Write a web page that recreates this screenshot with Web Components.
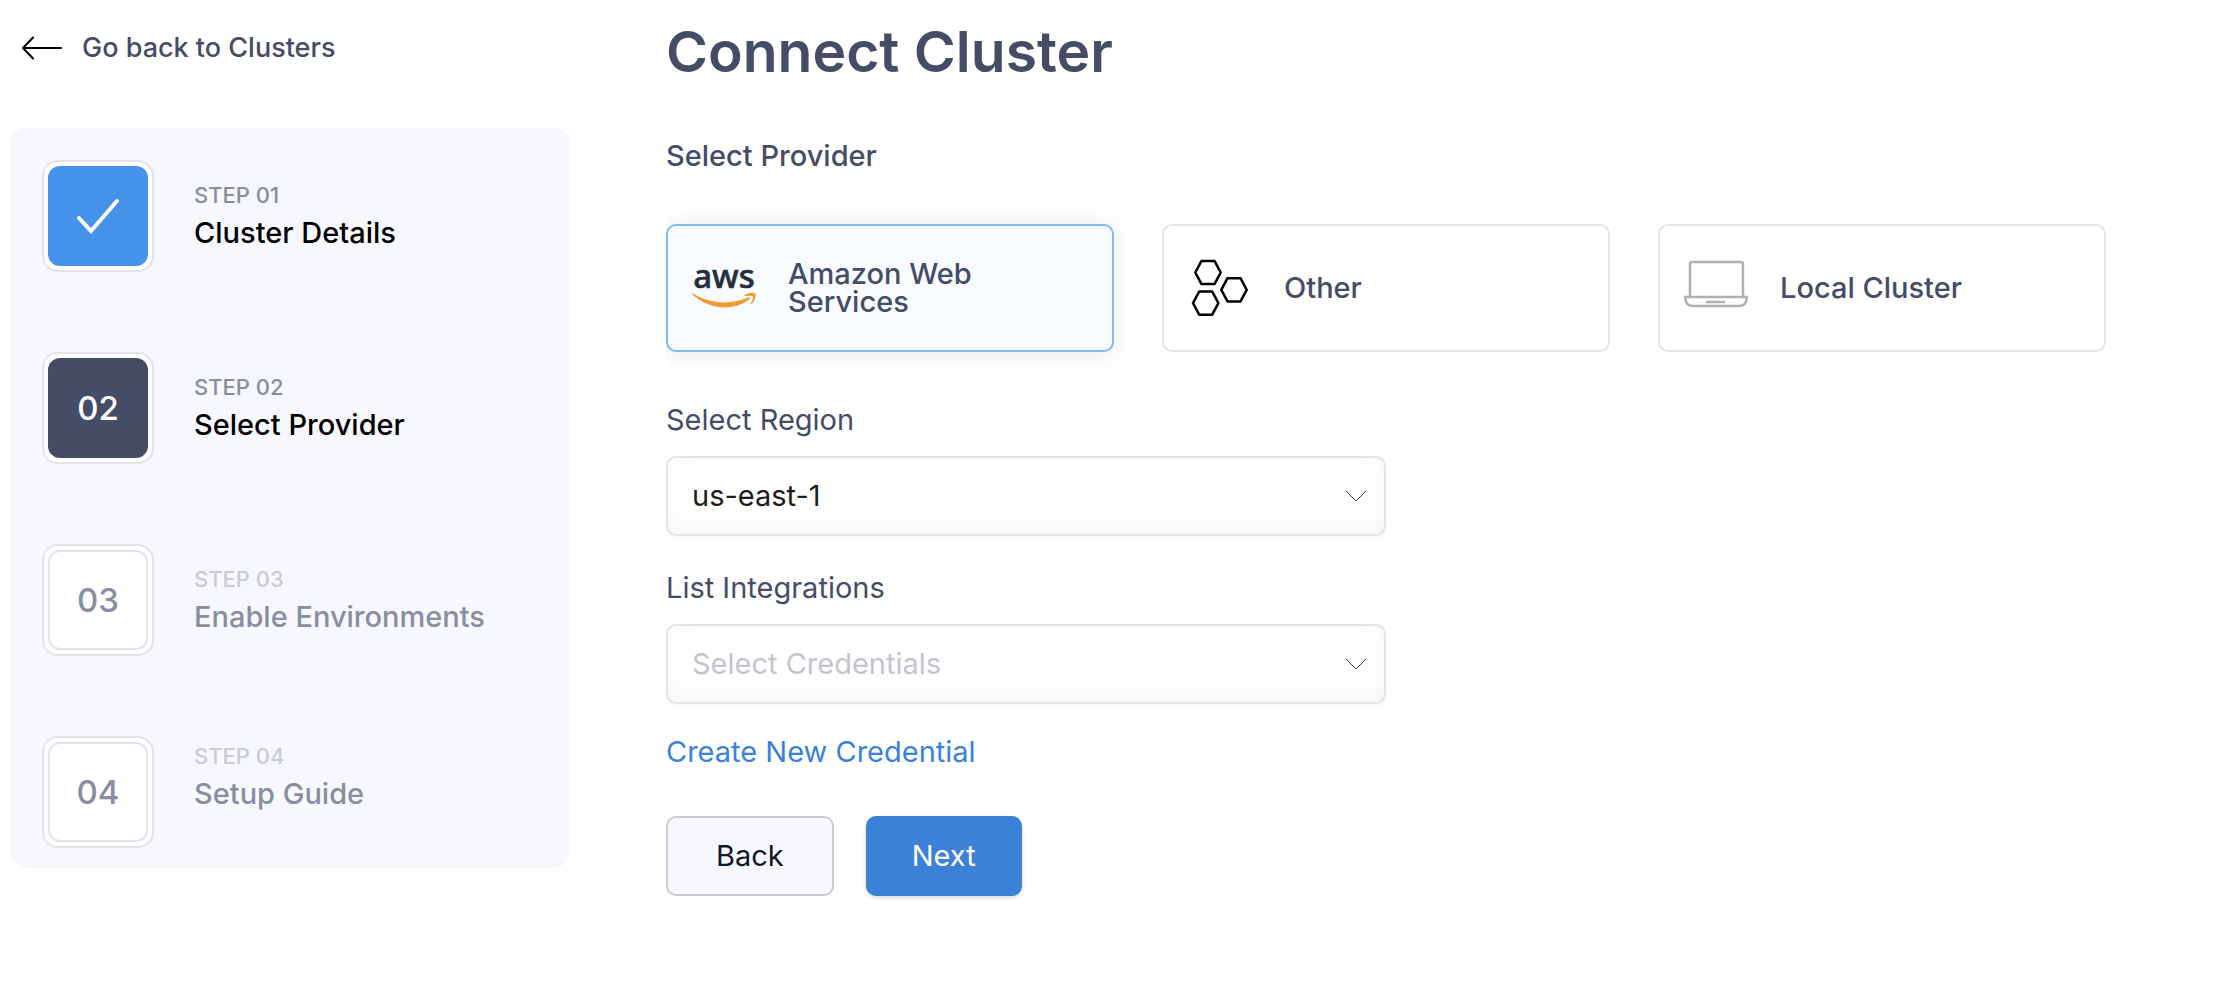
<!DOCTYPE html>
<html lang="en">
<head>
<meta charset="utf-8">
<meta name="viewport" content="width=device-width, initial-scale=1">
<title>Connect Cluster</title>
<style>
  body {
    margin: 0;
    background: #fff;
    color: #454c66;
    font-family: Inter, "Open Sans", sans-serif;
    font-size: 29px;
    line-height: 40px;
  }
</style>
</head>
<body>
<connect-cluster-page>
  <back-link slot="aside" href="#clusters">Go back to Clusters</back-link>
  <step-list slot="aside">
    <step-item state="done" number="01">Cluster Details</step-item>
    <step-item state="current" number="02">Select Provider</step-item>
    <step-item number="03">Enable Environments</step-item>
    <step-item number="04">Setup Guide</step-item>
  </step-list>

  <provider-picker>
    <provider-card selected>
      <svg slot="icon" width="64" height="64" viewBox="0 0 64 64" overflow="visible" aria-hidden="true">
        <text x="32" y="32" text-anchor="middle" font-family="Noto Sans, Open Sans, sans-serif" font-size="33" fill="#252f3e" stroke="#252f3e" stroke-width=".6">aws</text>
        <path d="M1 37.500C10 43 21 46.500 32 46.500c8 0 17-2 24.500-5.200 1.200-.5 2.200.8 1 1.700C51 48.800 41 51.500 33 51.500 21 51.500 9.500 46.500.5 38.800c-.7-.7-.2-1.600.5-1.300z" fill="#f29b34"/>
        <path d="M61 40.500c-1-1.200-6-.6-8.300-.3-.7.1-.8-.5-.2-1C56.800 36 62.900 36.400 63.500 37.300c.7 1-.2 7.500-3.800 10.500-.6.500-1.100.2-.9-.4.900-2 2.700-5.700 2.200-6.900z" fill="#f29b34"/>
      </svg>
      Amazon Web Services
    </provider-card>
    <provider-card>
      <svg slot="icon" width="64" height="64" viewBox="0 0 64 64" fill="none" stroke="#000" stroke-width="2.500" stroke-linejoin="round" aria-hidden="true">
        <path d="M13.500 4.900h13l6.200 11.600-6.200 11.600h-13L7.300 16.500z"/>
        <path d="M39.500 22.200h13l6.200 11.600-6.200 11.600h-13l-6.200-11.600z"/>
        <path d="M11.200 35.500h13l6.200 11.600-6.200 11.600h-13L5 47.100z"/>
      </svg>
      Other
    </provider-card>
    <provider-card>
      <svg slot="icon" width="64" height="64" viewBox="0 0 64 64" fill="none" stroke="#b0b0b0" stroke-width="2.500" aria-hidden="true">
        <path d="M6 40V8q0-2 2-2h49q2 0 2 2v32"/>
        <path d="M1.200 41h61.600q0 9-8 9H9.200q-8 0-8-9z"/>
        <path d="M22 46h19"/>
      </svg>
      Local Cluster
    </provider-card>
  </provider-picker>

  <select-field label="Select Region" value="us-east-1"></select-field>
  <select-field label="List Integrations" placeholder="Select Credentials"></select-field>
  <text-link href="#new-credential">Create New Credential</text-link>
  <form-actions>
    <action-button>Back</action-button>
    <action-button variant="primary">Next</action-button>
  </form-actions>
</connect-cluster-page>

<script>
function define(name, html, setup) {
  const template = document.createElement('template');
  template.innerHTML = html;
  customElements.define(name, class extends HTMLElement {
    connectedCallback() {
      if (this.shadowRoot) return;
      const root = this.attachShadow({ mode: 'open' });
      root.append(template.content.cloneNode(true));
      if (setup) setup(this, root);
    }
  });
}

define('connect-cluster-page', `
  <style>
    :host { display: grid; grid-template-columns: 7fr 18fr; gap: 96px; align-items: start; padding: 24px 132px 24px 10px; }
    aside { display: flex; flex-direction: column; gap: 56px; }
    main { display: flex; flex-direction: column; }
    h1 { margin: 0; font-size: 57px; font-weight: 600; line-height: 56px; }
    h2 { margin: 56px 0 48px; font-size: 29px; font-weight: 500; line-height: 40px; }
  </style>
  <aside><slot name="aside"></slot></aside>
  <main>
    <h1>Connect Cluster</h1>
    <h2>Select Provider</h2>
    <slot></slot>
  </main>`);

define('back-link', `
  <style>
    :host { display: flex; padding-left: 12px; }
    a { display: flex; align-items: center; gap: 20px; color: inherit; font-size: 27px; font-weight: 500; line-height: 48px; text-decoration: none; }
  </style>
  <a><svg width="40" height="24" viewBox="0 0 40 24" fill="none" stroke="#000" stroke-width="2" stroke-linecap="round" stroke-linejoin="round" aria-hidden="true"><path d="M39 12H1M11 1.500L1 12l10 10.500"/></svg><slot></slot></a>`,
  (host, root) => { root.querySelector('a').href = host.getAttribute('href'); });

define('step-list', `
  <style>
    :host { display: block; padding: 32px 32px 20px; border-radius: 16px; background: #f7f8fe; }
    nav { display: flex; flex-direction: column; gap: 80px; }
    ::slotted(:last-child) { --text-lift: 36px; }
  </style>
  <nav aria-label="Steps"><slot></slot></nav>`);

define('step-item', `
  <style>
    :host { display: flex; align-items: center; gap: 40px; --number: #888da0; --caption: #c9cad8; --title: #888da0; --fill: #fff; --edge: #e3e3ea; }
    :host([state]) { --number: #fff; --caption: #888da0; --title: #000; }
    :host([state="done"]) { --fill: #4592eb; --edge: #4592eb; }
    :host([state="current"]) { --fill: #454c66; --edge: #454c66; }
    .box { box-sizing: border-box; flex: none; width: 112px; height: 112px; padding: 4px; border: 2px solid #e3e3ea; border-radius: 16px; background: #fff; }
    .fill { box-sizing: border-box; display: grid; place-items: center; height: 100px; border: 2px solid var(--edge); border-radius: 12px; background: var(--fill); color: var(--number); font-size: 33px; font-weight: 500; }
    .text { padding-bottom: var(--text-lift, 6px); font-weight: 500; }
    .caption { color: var(--caption); font-size: 22px; line-height: 40px; }
    .title { color: var(--title); line-height: 36px; }
  </style>
  <div class="box"><div class="fill"></div></div>
  <div class="text"><div class="caption"></div><div class="title"><slot></slot></div></div>`,
  (host, root) => {
    const number = host.getAttribute('number');
    root.querySelector('.caption').textContent = 'STEP ' + number;
    const fill = root.querySelector('.fill');
    if (host.getAttribute('state') === 'done') {
      fill.innerHTML = '<svg width="42" height="36" viewBox="0 0 42 36" fill="none" stroke="#fff" stroke-width="4" stroke-linecap="round" role="img" aria-label="Done"><path d="M2 20l12 13L40 3"/></svg>';
    } else {
      fill.textContent = number;
    }
  });

define('provider-picker', `
  <style>
    :host { display: grid; grid-template-columns: repeat(3, 1fr); gap: 48px; margin-bottom: 48px; clip-path: inset(-40px -40px -40px 0); }
  </style>
  <slot></slot>`);

define('provider-card', `
  <style>
    :host { display: block; }
    button { box-sizing: border-box; display: flex; align-items: center; gap: 32px; width: 100%; height: 128px; padding: 0 24px; border: 2px solid #e3e3ea; border-radius: 10px; background: #fff; color: inherit; font: inherit; font-weight: 500; line-height: 28px; text-align: left; }
    :host([selected]) button { border-color: #80b9f4; background: #f8fcff; box-shadow: 0 2px 24px rgba(0, 0, 0, .1); }
    .label { max-width: 240px; }
    .icon { flex: none; width: 64px; height: 64px; }
  </style>
  <button type="button"><span class="icon"><slot name="icon"></slot></span><span class="label"><slot></slot></span></button>`,
  (host, root) => { root.querySelector('button').setAttribute('aria-pressed', host.hasAttribute('selected')); });

define('select-field', `
  <style>
    :host { display: block; margin-bottom: 32px; }
    label { display: block; margin-bottom: 16px; line-height: 40px; }
    .control { display: grid; width: 50%; align-items: center; }
    select, svg { grid-area: 1 / 1; }
    select { appearance: none; box-sizing: border-box; width: 100%; height: 80px; margin: 0; padding: 0 56px 0 24px; border: 2px solid #e3e3ea; border-radius: 10px; background: #fff; box-shadow: 0 2px 4px rgba(0, 0, 0, .03), inset 0 -6px 20px rgba(0, 0, 0, .04); color: #1c1c1c; font: inherit; }
    select.empty { color: #c3c5ce; }
    svg { justify-self: end; margin-right: 19px; pointer-events: none; }
  </style>
  <label for="field"></label>
  <div class="control">
    <select id="field"><option></option></select>
    <svg width="22" height="12" viewBox="0 0 22 12" fill="none" stroke="#444" aria-hidden="true"><path d="M1 1l10 10L21 1"/></svg>
  </div>`,
  (host, root) => {
    root.querySelector('label').textContent = host.getAttribute('label');
    root.querySelector('option').textContent = host.getAttribute('value') || host.getAttribute('placeholder');
    root.querySelector('select').classList.toggle('empty', !host.hasAttribute('value'));
  });

define('text-link', `
  <style>
    :host { display: block; margin: -4px 0 44px; }
    a { color: #3b81d8; text-decoration: none; }
  </style>
  <a><slot></slot></a>`,
  (host, root) => { root.querySelector('a').href = host.getAttribute('href'); });

define('form-actions', `
  <style>:host { display: flex; gap: 32px; }</style>
  <slot></slot>`);

define('action-button', `
  <style>
    :host { display: block; }
    button { box-sizing: border-box; height: 80px; padding: 0 48px; border: 2px solid #c9cad8; border-radius: 10px; background: #f7f8fe; color: #11162b; font: inherit; }
    :host([variant="primary"]) button { padding: 0 46px; border: 0; background: #3b81d8; color: #fff; box-shadow: 0 2px 4px rgba(0, 0, 0, .15); }
  </style>
  <button type="button"><slot></slot></button>`);
</script>
</body>
</html>
